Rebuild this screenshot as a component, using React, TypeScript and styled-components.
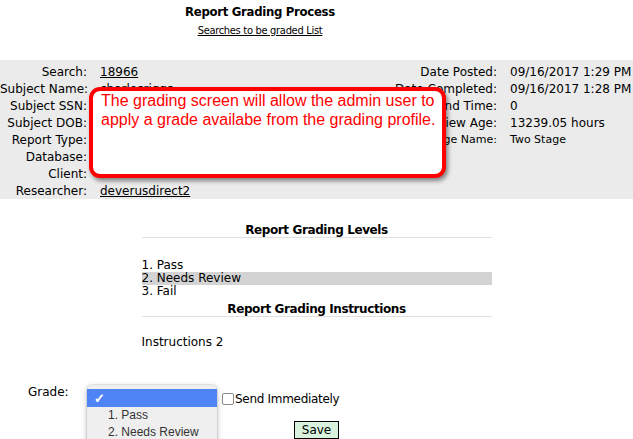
import React from 'react'
import styled, { createGlobalStyle } from 'styled-components'

const leftRows = [
  { label: 'Search:', value: '18966', link: true },
  { label: 'Subject Name:', value: 'charlesriggs' },
  { label: 'Subject SSN:', value: '' },
  { label: 'Subject DOB:', value: '' },
  { label: 'Report Type:', value: '' },
  { label: 'Database:', value: '' },
  { label: 'Client:', value: '' },
  { label: 'Researcher:', value: 'deverusdirect2', link: true },
]

const rightRows = [
  { label: 'Date Posted:', value: '09/16/2017 1:29 PM' },
  { label: 'Date Completed:', value: '09/16/2017 1:28 PM' },
  { label: 'Turnaround Time:', value: '0' },
  { label: 'Review Age:', value: '13239.05 hours' },
  { label: 'Stage Name:', value: 'Two Stage', small: true },
]

const levels = ['1. Pass', '2. Needs Review', '3. Fail']

function App() {
  return (
    <Page>
      <GlobalStyle />
      <Header>
        <Title>Report Grading Process</Title>
        <TopLink href="#">Searches to be graded List</TopLink>
      </Header>

      <InfoPanel>
        <InfoGrid>
          {leftRows.map((r) => (
            <React.Fragment key={r.label}>
              <Label>{r.label}</Label>
              <Value>{r.link ? <ValueLink href="#">{r.value}</ValueLink> : r.value}</Value>
            </React.Fragment>
          ))}
        </InfoGrid>
        <InfoGrid $right>
          {rightRows.map((r) => (
            <React.Fragment key={r.label}>
              <Label $small={r.small}>{r.label}</Label>
              <Value $small={r.small}>{r.value}</Value>
            </React.Fragment>
          ))}
        </InfoGrid>
        <Callout>
          The grading screen will allow the admin user to
          <br />
          apply a grade availabe from the grading profile.
        </Callout>
      </InfoPanel>

      <Section>
        <SectionHeader>Report Grading Levels</SectionHeader>
        <LevelList>
          {levels.map((l, i) => (
            <LevelItem key={l} $active={i === 1}>
              {l}
            </LevelItem>
          ))}
        </LevelList>
        <SectionHeader $gap>Report Grading Instructions</SectionHeader>
        <Instructions>Instructions 2</Instructions>
      </Section>

      <GradeRow>
        <GradeLabel>Grade:</GradeLabel>
        <SelectWrap>
          <SelectPopup>
            <Option $selected>
              <Check>✓</Check>
            </Option>
            {levels.map((l) => (
              <Option key={l}>{l}</Option>
            ))}
          </SelectPopup>
        </SelectWrap>
        <SendLabel>
          <Checkbox />
          Send Immediately
        </SendLabel>
      </GradeRow>
      <SaveButton>Save</SaveButton>
    </Page>
  )
}

export default App

const GlobalStyle = createGlobalStyle`
  html, body {
    margin: 0;
    padding: 0;
    background: #fff;
    overflow: hidden;
  }
  body {
    font-family: 'DejaVu Sans', Verdana, sans-serif;
    font-size: 12px;
    color: #000;
  }
`

const Page = styled.div`
  width: 633px;
  height: 439px;
  overflow: hidden;
  display: flex;
  flex-direction: column;
  align-items: center;
`

const Header = styled.div`
  align-self: flex-start;
  width: 520px;
  display: flex;
  flex-direction: column;
  align-items: center;
`

const Title = styled.h1`
  margin: 3px 0 0;
  font-family: 'DejaVu Sans Condensed', 'DejaVu Sans', sans-serif;
  font-stretch: condensed;
  font-size: 13px;
  font-weight: bold;
  line-height: 18px;
  letter-spacing: -0.3px;
`

const TopLink = styled.a`
  color: #000;
  font-family: 'DejaVu Sans Condensed', 'DejaVu Sans', sans-serif;
  font-stretch: condensed;
  font-size: 11px;
  line-height: 16px;
  letter-spacing: -0.3px;
  margin-top: 2px;
`

const InfoPanel = styled.div`
  position: relative;
  align-self: stretch;
  margin-top: 21px;
  height: 140px;
  box-sizing: border-box;
  padding: 3px 5px 0 0;
  background: #ebebeb;
  display: flex;
  justify-content: space-between;
  align-items: flex-start;
`

const InfoGrid = styled.div<{ $right?: boolean }>`
  display: grid;
  grid-template-columns: ${(p) => (p.$right ? 'auto 118px' : '87px auto')};
  grid-auto-rows: 17px;
  column-gap: 13px;
  align-items: center;
`

const Label = styled.div<{ $small?: boolean }>`
  text-align: right;
  white-space: nowrap;
  font-size: ${(p) => (p.$small ? '11px' : '12px')};
`

const Value = styled.div<{ $small?: boolean }>`
  white-space: nowrap;
  font-size: ${(p) => (p.$small ? '11px' : '12px')};
`

const ValueLink = styled.a`
  color: #000;
`

const Callout = styled.div`
  position: absolute;
  left: 89px;
  top: 27px;
  width: 357px;
  height: 91px;
  box-sizing: border-box;
  padding: 0 0 0 8px;
  background: #fff;
  border: 4px solid #ff0000;
  border-radius: 11px;
  box-shadow: 2px 3px 4px rgba(0, 0, 0, 0.45);
  font-family: 'Liberation Sans', Arial, sans-serif;
  font-size: 16px;
  line-height: 19px;
  white-space: nowrap;
  color: #ff0000;
`

const Section = styled.div`
  width: 350px;
  margin-top: 24px;
  display: flex;
  flex-direction: column;
`

const SectionHeader = styled.div<{ $gap?: boolean }>`
  margin-top: ${(p) => (p.$gap ? '4px' : '0')};
  text-align: center;
  font-weight: bold;
  font-size: 12px;
  line-height: 14px;
  letter-spacing: -0.4px;
  border-bottom: 1px solid #e0e0e0;
`

const LevelList = styled.div`
  margin-top: 21px;
  display: flex;
  flex-direction: column;
`

const LevelItem = styled.div<{ $active?: boolean }>`
  line-height: 13px;
  background: ${(p) => (p.$active ? '#d3d3d3' : 'transparent')};
`

const Instructions = styled.div`
  margin-top: 18px;
  line-height: 14px;
`

const GradeRow = styled.div`
  align-self: stretch;
  margin-top: 36px;
  height: 21px;
  display: flex;
  align-items: flex-start;
`

const GradeLabel = styled.div`
  margin-left: 28px;
  width: 59px;
  line-height: 14px;
`

const SelectWrap = styled.div`
  position: relative;
  width: 130px;
  height: 20px;
`

const SelectPopup = styled.div`
  position: absolute;
  top: 0;
  left: 0;
  width: 130px;
  padding-top: 4px;
  background: #efefef;
  border-radius: 5px;
  box-shadow: 0 0 0 1px rgba(0, 0, 0, 0.08), 0 2px 6px rgba(0, 0, 0, 0.25);
  font-family: 'Liberation Sans', Arial, sans-serif;
  font-size: 12px;
  color: #333;
  z-index: 2;
`

const Option = styled.div<{ $selected?: boolean }>`
  height: 17px;
  line-height: 17px;
  padding-left: 21px;
  background: ${(p) => (p.$selected ? '#4f84f7' : 'transparent')};
  color: ${(p) => (p.$selected ? '#fff' : '#333')};
  position: relative;
  &:first-child {
    height: 18px;
  }
`

const Check = styled.span`
  position: absolute;
  left: 7px;
  top: 1px;
  font-size: 13px;
  font-weight: bold;
`

const SendLabel = styled.label`
  margin-left: 5px;
  margin-top: 7px;
  display: flex;
  align-items: center;
  gap: 1px;
  line-height: 14px;
  letter-spacing: -0.3px;
`

const Checkbox = styled.span`
  display: inline-block;
  width: 10px;
  height: 10px;
  border: 1px solid #8a8a8a;
  border-radius: 2px;
  background: #fff;
`

const SaveButton = styled.button`
  margin-top: 15px;
  font-family: 'DejaVu Sans', Verdana, sans-serif;
  font-size: 12px;
  color: #000;
  background: #d9f2dd;
  border: 1px solid #000;
  padding: 1px 7px;
  line-height: 14px;
  border-radius: 0;
`
